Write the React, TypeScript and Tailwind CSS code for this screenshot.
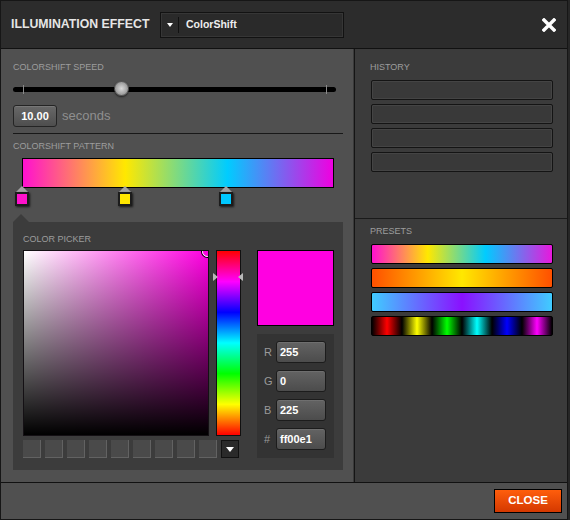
import React from "react"

const STOPS = [
  { color: "#ff12cc", pos: 0 },
  { color: "#ffe600", pos: 0.33 },
  { color: "#00c8ff", pos: 0.655 },
]

const PRESETS = [
  "bg-[linear-gradient(to_right,#ff10d0_0%,#ffe800_31%,#00ccff_63%,#e818dc_100%)]",
  "bg-[linear-gradient(to_right,#ff5000_0%,#ffe800_50%,#ff5000_100%)]",
  "bg-[linear-gradient(to_right,#40ccff_0%,#8a10ff_50%,#40ccff_100%)]",
  "bg-[linear-gradient(to_right,#000_0%,#f00_8.33%,#000_16.67%,#ff0_25%,#000_33.33%,#0f0_41.67%,#000_50%,#0ff_58.33%,#000_66.67%,#00f_75%,#000_83.33%,#f0f_91.67%,#000_100%)]",
]

const RGB = [
  { label: "R", value: "255" },
  { label: "G", value: "0" },
  { label: "B", value: "225" },
  { label: "#", value: "ff00e1" },
]

function Label({ children, className = "" }: { children: React.ReactNode; className?: string }) {
  return <div className={"text-[9px] leading-[11px] text-[#9d9d9d] " + className}>{children}</div>
}

function Field({ value }: { value: string }) {
  return (
    <div className="flex h-[22px] w-[50px] items-center rounded-[3px] border border-[#1c1c1c] bg-[linear-gradient(to_bottom,#636363,#4c4c4c)] pl-[3px] text-[11px] font-bold text-white shadow-[inset_0_1px_0_rgba(255,255,255,0.08)]">
      {value}
    </div>
  )
}

export default function App() {
  return (
    <div className="h-[520px] w-[570px] bg-[#262626] font-['Liberation_Sans',Arial,sans-serif]">
      <div className="flex h-[520px] w-[568px] flex-col border border-[#161616] bg-[#505050]">
        {/* header */}
        <div className="flex h-[48px] shrink-0 items-center border-b border-[#111] bg-[#2c2c2c] pl-[10px]">
          <div className="w-[149px] text-[12.3px] font-bold text-[#e6e6e6]">ILLUMINATION EFFECT</div>
          <div className="flex h-[26px] w-[184px] items-center border border-[#121212] bg-[#2a2a2a] shadow-[inset_0_0_0_1px_#363636]">
            <div className="flex w-[17px] justify-center pl-[1px]">
              <div className="h-0 w-0 border-x-[3px] border-t-[4px] border-x-transparent border-t-white" />
            </div>
            <div className="h-[16px] w-px bg-[#111]" />
            <div className="ml-[7px] text-[10.5px] font-bold text-[#eeeeee]">ColorShift</div>
          </div>
          <div className="ml-auto mr-[11px]">
            <svg width="14" height="14" viewBox="0 0 14 14">
              <path d="M2 2 L12 12 M12 2 L2 12" stroke="#fff" strokeWidth="3.4" strokeLinecap="square" />
            </svg>
          </div>
        </div>

        {/* body */}
        <div className="flex min-h-0 flex-1">
          {/* left */}
          <div className="w-[354px] shrink-0 border-r border-[#151515] bg-[#505050] pl-[12px] pt-[13px] shadow-[inset_-1px_0_0_#3a3a3a]">
            <Label>COLORSHIFT SPEED</Label>
            <div className="relative mt-[8px] flex h-[16px] w-[330px] items-center">
              <div className="h-[5px] w-[323px] rounded-full bg-black" />
              <div className="absolute left-[10px] top-[4px] h-[9px] w-px bg-[#8a8a8a]" />
              <div className="absolute left-[313px] top-[4px] h-[9px] w-px bg-[#8a8a8a]" />
              <div className="absolute left-[101px] top-0 h-[15px] w-[15px] rounded-full border border-[#5a5a5a] bg-[radial-gradient(circle_at_50%_50%,#d8d8d8_0%,#b0b0b0_45%,#7c7c7c_100%)] shadow-[0_1px_2px_rgba(0,0,0,0.6)]" />
            </div>
            <div className="mt-[8px] flex items-center gap-[5px]">
              <div className="flex h-[22px] w-[44px] items-center justify-center rounded-[3px] border border-[#242424] bg-[linear-gradient(to_bottom,#686868,#4e4e4e)] text-[11px] font-bold text-white shadow-[inset_0_1px_0_rgba(255,255,255,0.1)]">
                10.00
              </div>
              <div className="text-[13px] text-[#8f8f8f]">seconds</div>
            </div>
            <div className="mt-[6px] h-px w-[330px] bg-[#181818]" />

            <Label className="mt-[7px]">COLORSHIFT PATTERN</Label>
            <div className="ml-[9px] mt-[6px] h-[30px] w-[312px] border border-black bg-[linear-gradient(to_right,#ff10d0_0%,#ffe800_33%,#00ccff_66%,#f000e0_100%)]" />
            <div className="relative -mt-[2px] h-[21px] w-[330px]">
              {STOPS.map((s) => (
                <div
                  key={s.color}
                  className="absolute top-0 flex w-[14px] flex-col items-center"
                  style={{ left: 9 + s.pos * 312 - 7 }}
                >
                  <div className="h-0 w-0 border-x-[6px] border-b-[6px] border-x-transparent border-b-[#a2a2a2]" />
                  <div
                    className="h-[14px] w-[14px] border-2 border-[#1c1c1c] shadow-[1px_1px_2px_rgba(0,0,0,0.7)]"
                    style={{ background: s.color }}
                  />
                </div>
              ))}
            </div>

            {/* color picker */}
            <div className="mt-[7px] h-0 w-0 border-x-[8px] border-b-[8px] border-x-transparent border-b-[#3c3c3c]" />
            <div className="h-[248px] w-[330px] bg-[#3c3c3c] pl-[10px] pt-[12px]">
              <Label>COLOR PICKER</Label>
              <div className="mt-[5px] flex gap-[16px]">
                <div className="flex flex-col gap-[4px]">
                  <div className="flex gap-[7px]">
                    <div className="relative h-[186px] w-[186px] overflow-hidden border border-[#141014] bg-[linear-gradient(to_right,#ffffff,#ff00e1)]">
                      <div className="h-full w-full bg-[linear-gradient(to_bottom,rgba(0,0,0,0),#000)]" />
                      <div className="absolute -right-[5px] -top-[5px] h-[11px] w-[11px] rounded-full border-[1.5px] border-white shadow-[0_0_0_1px_#000]" />
                    </div>
                    <div className="relative h-[186px] w-[25px]">
                      <div className="h-full w-full border border-[#111] bg-[linear-gradient(to_bottom,#f00_0%,#f0f_16.67%,#00f_33.33%,#0ff_50%,#0f0_66.67%,#ff0_83.33%,#f00_100%)]" />
                      <div className="absolute -left-[3px] top-[23px] h-0 w-0 border-y-[4px] border-l-[5px] border-y-transparent border-l-[#b8b8b8]" />
                      <div className="absolute -right-[2px] top-[23px] h-0 w-0 border-y-[4px] border-r-[5px] border-y-transparent border-r-[#b8b8b8]" />
                    </div>
                  </div>
                  <div className="flex gap-[4px]">
                    {Array.from({ length: 9 }).map((_, i) => (
                      <div key={i} className="h-[18px] w-[18px] border-b border-r border-[#626262] bg-[#4a4a4a]" />
                    ))}
                    <div className="flex h-[18px] w-[18px] items-center justify-center border border-[#111] bg-[#2a2a2a]">
                      <div className="h-0 w-0 border-x-[4px] border-t-[5px] border-x-transparent border-t-white" />
                    </div>
                  </div>
                </div>
                <div className="flex flex-col gap-[8px]">
                  <div className="h-[76px] w-[77px] border border-black bg-[#ff00e1]" />
                  <div className="flex h-[124px] w-[77px] flex-col gap-[7px] bg-[#333333] pl-[7px] pt-[7px]">
                    {RGB.map((r) => (
                      <div key={r.label} className="flex items-center">
                        <div className="w-[12px] text-[11px] text-[#9a9a9a]">{r.label}</div>
                        <Field value={r.value} />
                      </div>
                    ))}
                  </div>
                </div>
              </div>
            </div>
          </div>

          {/* right */}
          <div className="flex flex-1 flex-col bg-[#3b3b3b]">
            <div className="h-[170px] shrink-0 border-b border-[#1a1a1a] pl-[15px] pt-[13px]">
              <Label>HISTORY</Label>
              <div className="ml-px mt-[7px] flex flex-col gap-[4px]">
                {Array.from({ length: 4 }).map((_, i) => (
                  <div
                    key={i}
                    className="h-[20px] w-[182px] rounded-[2px] border border-[#141414] bg-[#393939] shadow-[inset_0_0_0_1px_#444]"
                  />
                ))}
              </div>
            </div>
            <div className="flex-1 pl-[15px] pt-[7px]">
              <Label>PRESETS</Label>
              <div className="ml-px mt-[7px] flex flex-col gap-[4px]">
                {PRESETS.map((p) => (
                  <div key={p} className={"h-[20px] w-[182px] rounded-[2px] border border-black " + p} />
                ))}
              </div>
            </div>
          </div>
        </div>

        {/* footer */}
        <div className="flex h-[37px] shrink-0 items-center justify-end border-t border-[#111] bg-[#505050] pr-[5px]">
          <div className="flex h-[24px] w-[68px] items-center justify-center border border-black bg-[linear-gradient(to_bottom,#ff5e0c,#d43800)] text-[11.5px] font-bold text-white">
            CLOSE
          </div>
        </div>
      </div>
    </div>
  )
}
